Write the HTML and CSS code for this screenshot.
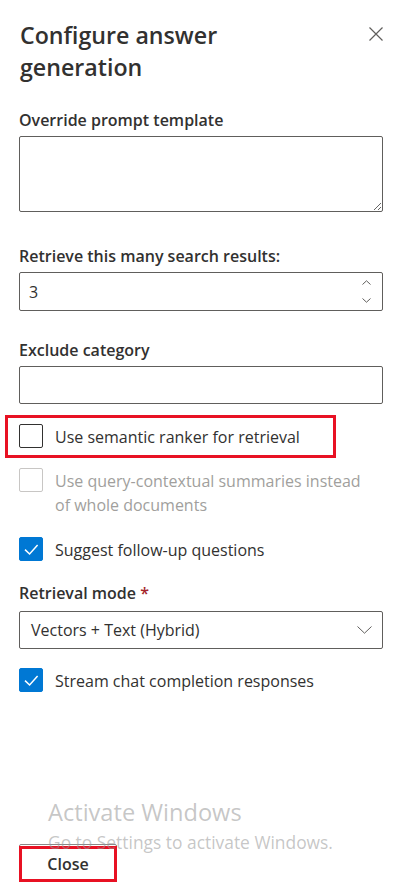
FILE: index.html
```html
<!DOCTYPE html>
<html lang="en">
<head>
<meta charset="utf-8">
<title>Configure answer generation</title>
<link rel="stylesheet" href="styles.css">
</head>
<body>
<div class="panel">
  <div class="head">
    <h1 class="title">Configure answer generation</h1>
    <button class="close-x" aria-label="Close">
      <svg width="14" height="14" viewBox="0 0 14 14"><path d="M0.5 0.5 L13.5 13.5 M13.5 0.5 L0.5 13.5" stroke="#605e5c" stroke-width="1.2" fill="none"/></svg>
    </button>
  </div>

  <div class="field f-prompt">
    <label class="lbl">Override prompt template</label>
    <textarea class="textarea"></textarea>
  </div>

  <div class="field f-top">
    <label class="lbl">Retrieve this many search results:</label>
    <div class="box spin">
      <span class="val">3</span>
      <span class="arrows">
        <svg width="9" height="5" viewBox="0 0 9 5"><path d="M0.5 4.5 L4.5 0.8 L8.5 4.5" stroke="#605e5c" stroke-width="1" fill="none"/></svg>
        <svg width="9" height="5" viewBox="0 0 9 5"><path d="M0.5 0.5 L4.5 4.2 L8.5 0.5" stroke="#605e5c" stroke-width="1" fill="none"/></svg>
      </span>
    </div>
  </div>

  <div class="field f-exclude">
    <label class="lbl">Exclude category</label>
    <div class="box text-in"></div>
  </div>

  <div class="check-row highlight r-semantic">
    <span class="cb"></span>
    <span class="cb-text">Use semantic ranker for retrieval</span>
  </div>

  <div class="check-row disabled r-summaries">
    <span class="cb"></span>
    <span class="cb-text narrow">Use query-contextual summaries instead of whole documents</span>
  </div>

  <div class="check-row r-suggest">
    <span class="cb checked">
      <svg width="24" height="24" viewBox="0 0 24 24"><path d="M6 12.6 L10.6 17 L18.6 8" stroke="#fff" stroke-width="1.5" fill="none"/></svg>
    </span>
    <span class="cb-text">Suggest follow-up questions</span>
  </div>

  <div class="field f-mode">
    <label class="lbl">Retrieval mode <span class="req">*</span></label>
    <div class="box dropdown">
      <span class="val">Vectors + Text (Hybrid)</span>
      <svg width="15" height="8" viewBox="0 0 15 8"><path d="M0.5 0.5 L7.5 7.2 L14.5 0.5" stroke="#605e5c" stroke-width="1" fill="none"/></svg>
    </div>
  </div>

  <div class="check-row r-stream">
    <span class="cb checked">
      <svg width="24" height="24" viewBox="0 0 24 24"><path d="M6 12.6 L10.6 17 L18.6 8" stroke="#fff" stroke-width="1.5" fill="none"/></svg>
    </span>
    <span class="cb-text">Stream chat completion responses</span>
  </div>

  <div class="footer">
    <button class="btn highlight-btn">Close</button>
  </div>

  <div class="watermark">
    <div class="wm-title">Activate Windows</div>
    <div class="wm-sub">Go to Settings to activate Windows.</div>
  </div>
</div>
</body>
</html>
```

FILE: styles.css
```css
* { box-sizing: border-box; }

html, body {
  margin: 0;
  padding: 0;
  background: #ffffff;
}

body {
  font-family: "Open Sans", "Noto Sans", sans-serif;
  color: #323130;
}

.panel {
  position: relative;
  width: 410px;
  min-height: 896px;
  padding: 19px 27px 14px 19px;
  display: flex;
  flex-direction: column;
}

.head {
  display: flex;
  justify-content: space-between;
  align-items: flex-start;
}

.title {
  margin: 0;
  max-width: 300px;
  font-size: 23.2px;
  font-weight: 600;
  line-height: 32px;
  color: #323130;
  padding-left: 1px;
}

.close-x {
  margin-top: 8px;
  padding: 0;
  border: 0;
  background: transparent;
  width: 14px;
  height: 14px;
  display: flex;
}

.field {
  display: flex;
  flex-direction: column;
}

.lbl {
  font-size: 16px;
  font-weight: 600;
  line-height: 24px;
  color: #323130;
  margin-bottom: 4px;
}

.req { color: #a4262c; }

.f-prompt { margin-top: 25px; }
.f-top { margin-top: 31.5px; }
.f-exclude { margin-top: 27px; }
.f-mode { margin-top: 20.5px; }
.f-mode .lbl { margin-bottom: 5.5px; }

.textarea {
  display: block;
  width: 100%;
  height: 76px;
  border: 1px solid #605e5c;
  border-radius: 2px;
  resize: vertical;
  font-family: inherit;
  font-size: 16px;
  padding: 6px 10px;
  outline: none;
  background: #fff;
}

.box {
  border: 1px solid #605e5c;
  border-radius: 2px;
  background: #fff;
  display: flex;
  align-items: center;
}

.spin {
  height: 39px;
  padding: 0 0 0 9px;
  justify-content: space-between;
}

.val {
  font-size: 16px;
  color: #323130;
  padding-top: 1px;
}

.arrows {
  width: 30px;
  height: 100%;
  display: flex;
  flex-direction: column;
  align-items: center;
  justify-content: center;
  gap: 13px;
  padding-right: 7px;
  padding-left: 6px;
}

.text-in { height: 38px; }

.dropdown {
  height: 38px;
  padding: 0 10px 0 11px;
  justify-content: space-between;
}

.check-row {
  display: flex;
  align-items: flex-start;
  gap: 12px;
  position: relative;
}

.r-semantic { margin-top: 20px; }
.r-summaries { margin-top: 20px; }
.r-suggest { margin-top: 21px; }
.r-stream { margin-top: 19px; }

.cb {
  flex: 0 0 24px;
  width: 24px;
  height: 24px;
  border: 1px solid #323130;
  border-radius: 2px;
  display: flex;
  background: #fff;
}

.cb.checked {
  border-color: #0078d4;
  background: #0078d4;
}

.cb.checked svg { margin: -1px; }

.cb-text {
  font-size: 16px;
  line-height: 24px;
  color: #323130;
  padding-top: 1px;
  margin-bottom: -1px;
}

.disabled .cb { border-color: #c8c6c4; }
.disabled .cb-text { color: #a19f9d; }
.narrow { max-width: 316px; }

.highlight::after {
  content: "";
  position: absolute;
  top: -9px;
  bottom: -10px;
  left: -14px;
  width: 325px;
  border: 3px solid #e81123;
  pointer-events: none;
}

.footer {
  margin-top: auto;
  display: flex;
}

.btn {
  position: relative;
  width: 98px;
  height: 38px;
  border: 1px solid #8a8886;
  border-radius: 2px;
  background: #fff;
  font-family: inherit;
  font-size: 16px;
  font-weight: 600;
  color: #323130;
  padding: 2px 0 0;
}

.highlight-btn::after {
  content: "";
  position: absolute;
  top: 1px;
  left: -1px;
  right: -1px;
  bottom: -1px;
  border: 3px solid #e81123;
}

.watermark {
  position: absolute;
  left: 48px;
  top: 797px;
  color: rgba(150, 150, 150, 0.55);
  pointer-events: none;
}

.wm-title {
  font-size: 23.6px;
  line-height: 30px;
}

.wm-sub {
  font-size: 17.4px;
  line-height: 22px;
  margin-top: 4px;
}
```
